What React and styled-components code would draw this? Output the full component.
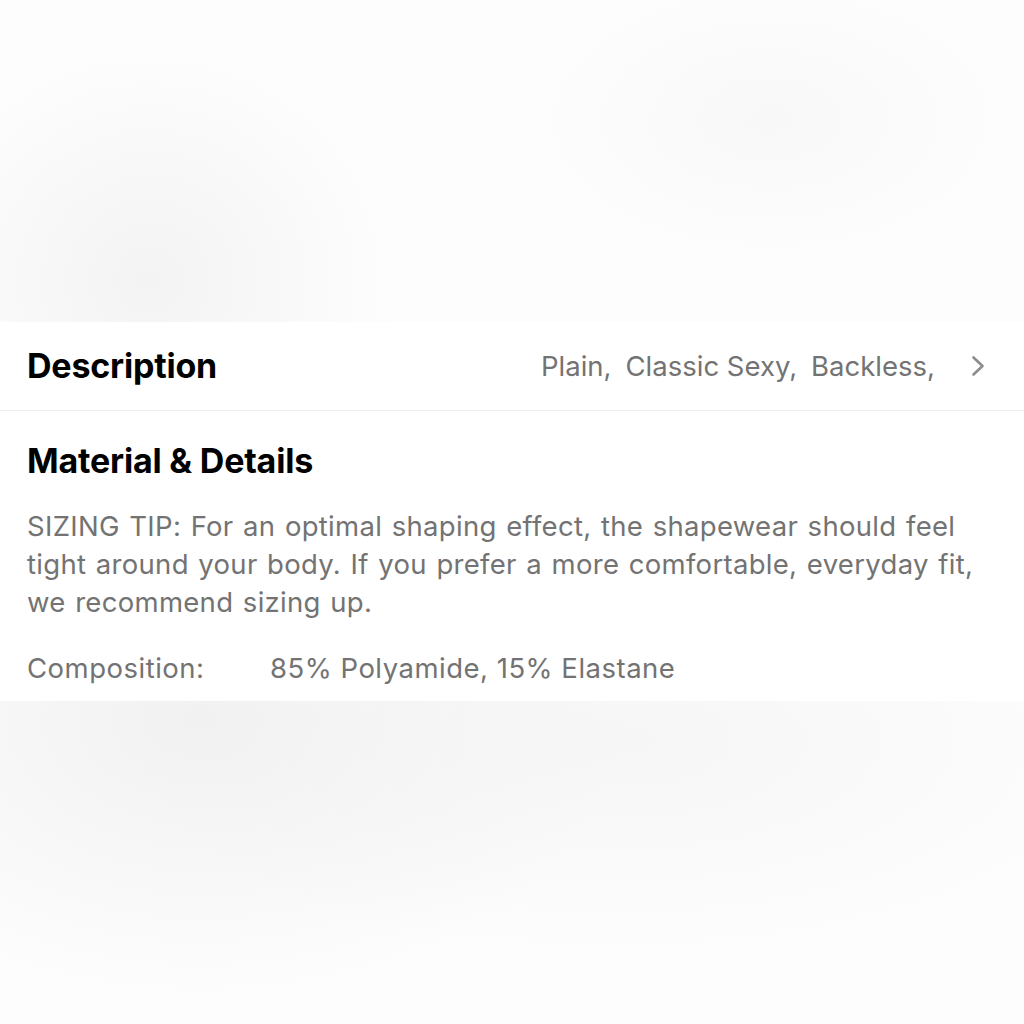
import React from "react";
import styled, { createGlobalStyle } from "styled-components";

const Global = createGlobalStyle`
  html, body { margin: 0; padding: 0; }
  body {
    width: 1024px;
    height: 1024px;
    overflow: hidden;
    font-family: Inter, "Noto Sans", "Liberation Sans", sans-serif;
    background-color: #fdfdfd;
    background-image:
      radial-gradient(ellipse 240px 230px at 150px 280px, #f3f3f3 0%, rgba(243,243,243,0) 100%),
      radial-gradient(ellipse 240px 140px at 770px 120px, #f8f8f8 0%, rgba(248,248,248,0) 100%),
      radial-gradient(ellipse 420px 280px at 200px 720px, #f1f1f1 0%, rgba(241,241,241,0) 100%),
      radial-gradient(ellipse 520px 220px at 620px 740px, #f6f6f6 0%, rgba(246,246,246,0) 100%);
  }
`;

const Page = styled.div`
  display: flex;
  flex-direction: column;
  padding-top: 322px;
`;

const Card = styled.section`
  background: #ffffff;
  display: flex;
  flex-direction: column;
`;

const Row = styled.div`
  display: flex;
  align-items: center;
  height: 88px;
  padding: 0 39px 0 27px;
  border-bottom: 1px solid #efefef;
`;

const Title = styled.h2`
  margin: 0;
  font-size: 34px;
  font-weight: 700;
  color: #000;
  letter-spacing: -0.2px;
  line-height: 1;
`;

const Values = styled.div`
  margin-left: auto;
  display: flex;
  align-items: center;
  gap: 14px;
  font-size: 27.5px;
  letter-spacing: 0;
  color: #737373;
`;

const ChevronSlot = styled.span`
  display: flex;
  margin-left: 22px;
`;

const Section = styled.div`
  display: flex;
  flex-direction: column;
  padding: 33px 27px 14px 27px;
`;

const Body = styled.p`
  margin: 29px 0 0;
  font-size: 27.5px;
  line-height: 38px;
  letter-spacing: 0.3px;
  word-spacing: 1.5px;
  color: #737373;
`;

const Spec = styled.div`
  display: grid;
  grid-template-columns: 243px 1fr;
  margin-top: 28px;
  font-size: 27.5px;
  line-height: 38px;
  letter-spacing: 0.5px;
  color: #737373;
`;

const Chevron = () => (
  <svg width="14" height="22" viewBox="0 0 14 22" fill="none">
    <polyline points="2.5,2.5 11.5,11 2.5,19.5" stroke="#8c8c8c" strokeWidth="2.6" strokeLinecap="round" strokeLinejoin="round" />
  </svg>
);

const tags = ["Plain,", "Classic Sexy,", "Backless,"];

export default function App() {
  return (
    <>
      <Global />
      <Page>
        <Card>
          <Row>
            <Title>Description</Title>
            <Values>
              {tags.map((t) => (
                <span key={t}>{t}</span>
              ))}
              <ChevronSlot>
                <Chevron />
              </ChevronSlot>
            </Values>
          </Row>
          <Section>
            <Title>Material &amp; Details</Title>
            <Body>
              SIZING TIP: For an optimal shaping effect, the shapewear should feel tight around your body. If you prefer a more comfortable, everyday fit, we recommend sizing up.
            </Body>
            <Spec>
              <span>Composition:</span>
              <span>85% Polyamide, 15% Elastane</span>
            </Spec>
          </Section>
        </Card>
      </Page>
    </>
  );
}
